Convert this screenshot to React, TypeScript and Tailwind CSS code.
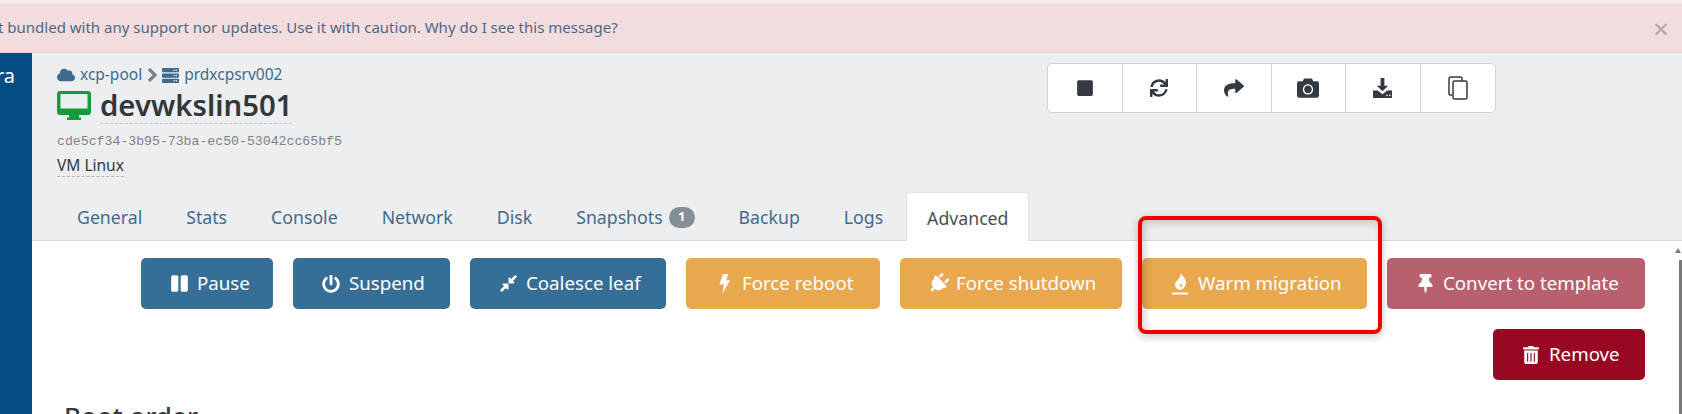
import { FaCamera, FaCloud, FaCompressAlt, FaPause, FaPlug, FaPowerOff, FaServer, FaShare, FaStop, FaSync, FaThumbtack, FaTrashAlt } from 'react-icons/fa'
import type { ReactNode } from 'react'

const tabs = ['General', 'Stats', 'Console', 'Network', 'Disk']

function BoltIcon() {
  return (
    <svg viewBox="0 0 10 18" className="w-[11px] h-[20px]" fill="currentColor">
      <path d="M3.500 0h5L6.500 5.500H10L3 18l1.500-8.500H.5z" />
    </svg>
  )
}

function FireIcon() {
  return (
    <svg viewBox="0 0 16 22" className="w-[16px] h-[22px]" fill="currentColor">
      <path fillRule="evenodd" d="M9 0c1 3 5 5 5 9.500 0 4-3 7-6.500 7.500C4.500 16.500 3 14 3 11.500 3 8 9 5 9 0zM9.500 10c-1 1.500-1.500 2-1.500 3 0 1 .5 1.500 1 1.200 1-1 1.200-2.500.5-4.200z" />
      <rect x="0" y="19.500" width="16" height="2" />
    </svg>
  )
}

function VmIcon() {
  return (
    <svg viewBox="0 0 34 29" className="w-[34px] h-[29px]" fill="#179a3a">
      <path fillRule="evenodd" d="M3 0h28a3 3 0 0 1 3 3v18a3 3 0 0 1-3 3H3a3 3 0 0 1-3-3V3a3 3 0 0 1 3-3zM3.500 3v14.500h27V3z" />
      <rect x="12" y="23" width="10" height="4" />
      <rect x="10" y="26.500" width="14" height="2.500" />
    </svg>
  )
}

function PathChevron() {
  return (
    <svg viewBox="0 0 10 14" className="w-[10px] h-[14px]" fill="none" stroke="#7a8288" strokeWidth="3.200">
      <path d="M2 1l6 6-6 6" />
    </svg>
  )
}

function DownloadDrive() {
  return (
    <svg viewBox="0 0 20 22" className="w-[19px] h-[21px]" fill="currentColor">
      <path d="M8 0h4v8h4l-6 6-6-6h4z" />
      <path d="M0 13h5l5 4 5-4h5v8H0z" />
      <rect x="14" y="17.500" width="1.500" height="1.500" fill="#fff" />
      <rect x="17" y="17.500" width="1.500" height="1.500" fill="#fff" />
    </svg>
  )
}

function CopyIcon() {
  return (
    <svg viewBox="0 0 20 24" className="w-[20px] h-[24px]" fill="none" stroke="currentColor" strokeWidth="1.500">
      <path d="M4 19H2.500A1.500 1.500 0 0 1 1 17.500V2.500A1.500 1.500 0 0 1 2.500 1h10A1.500 1.500 0 0 1 14 2.500V5" />
      <rect x="5" y="5" width="14" height="18" rx="1.500" />
    </svg>
  )
}

function ActionButton({ icon, label, className }: { icon: ReactNode; label: string; className: string }) {
  return (
    <button className={`h-[51px] rounded-[5px] pl-[27px] flex items-center gap-[7px] text-white text-[18.700px] ${className}`}>
      <span className="w-[22px] flex items-center justify-center">{icon}</span>
      <span>{label}</span>
    </button>
  )
}

export default function App() {
  const toolbar = [
    <FaStop key="stop" size={18} />,
    <FaSync key="sync" size={18} />,
    <FaShare key="share" size={20} />,
    <FaCamera key="camera" size={22} />,
    <DownloadDrive key="download" />,
    <CopyIcon key="copy" />,
  ]

  return (
    <div className="w-[1682px] h-[414px] overflow-hidden bg-white relative font-['Noto_Sans','Open_Sans',sans-serif] text-[#343a40]">
      <div className="h-[3px] bg-[#f6efe9]" />
      <div className="h-[50px] bg-[#f3dcdd] border-b border-[#ecd0d2] flex items-center justify-between pr-[13px] text-[#4d6a85] text-[15px] overflow-hidden">
        <span className="-ml-[2px]">t bundled with any support nor updates. Use it with caution. Why do I see this message?</span>
        <span className="text-[#b3a6a9] text-[28px] leading-none">×</span>
      </div>
      <div className="flex h-[361px]">
        <aside className="w-[32px] shrink-0 bg-[#034c81] text-white text-[20px] pt-[8px] overflow-hidden">
          <span className="block -ml-[4px]">ra</span>
        </aside>
        <main className="flex-1 min-w-0">
          <header className="h-[188px] bg-[#eceef0] border-b border-[#d9dcdf] flex flex-col relative">
            <div className="flex justify-between pl-[25px]">
              <div className="pt-[12px]">
                <div className="flex items-center gap-[5px] text-[15.500px] text-[#3f6b8f] h-[20px]">
                  <FaCloud size={18} />
                  <span>xcp-pool</span>
                  <PathChevron />
                  <FaServer size={17} />
                  <span>prdxcpsrv002</span>
                </div>
                <div className="flex items-center gap-[9px] h-[40px]">
                  <VmIcon />
                  <h1 className="text-[29.300px] font-semibold leading-[36px] border-b border-dashed border-[#c4c7ca] text-[#32373b]">devwkslin501</h1>
                </div>
                <div className="font-['Liberation_Mono',monospace] text-[13.200px] text-[#7d8388] mt-[7px]">cde5cf34-3b95-73ba-ec50-53042cc65bf5</div>
                <div className="text-[15.500px] mt-[3px] w-fit border-b border-dashed border-[#b5b8bb] leading-[21px]">VM Linux</div>
              </div>
              <div className="mr-[186px] mt-[10px] h-[50px] flex bg-white border border-[#cfd2d4] rounded-[5px]">
                {toolbar.map((icon, i) => (
                  <div key={i} className="w-[74.500px] flex items-center justify-center text-[#343a40] border-r border-[#cfd2d4] last:border-r-0">
                    {icon}
                  </div>
                ))}
              </div>
            </div>
            <nav className="mt-auto flex items-end h-[48px] pl-[23px] text-[17.700px] text-[#3f6b8f]">
              {tabs.map((t) => (
                <div key={t} className="px-[22px] h-full pt-[2px] flex items-center">{t}</div>
              ))}
              <div className="px-[22px] h-full pt-[2px] flex items-center gap-[6px]">
                <span>Snapshots</span>
                <span className="w-[26px] h-[21px] rounded-full bg-[#868e96] text-white text-[13px] font-bold flex items-center justify-center">1</span>
              </div>
              <div className="px-[22px] h-full pt-[2px] flex items-center">Backup</div>
              <div className="px-[22px] h-full pt-[2px] flex items-center">Logs</div>
              <div className="ml-[1px] px-[20px] h-[49px] -mb-px bg-white border border-b-0 border-[#dee2e6] rounded-t-[4px] pt-[2px] flex items-center text-[#495057]">Advanced</div>
            </nav>
          </header>
          <section className="pr-[37px]">
            <div className="flex flex-wrap justify-end gap-x-[20px] gap-y-[20px] pt-[17px]">
              <ActionButton icon={<FaPause size={19} />} label="Pause" className="w-[132px] bg-[#366e98]" />
              <ActionButton icon={<FaPowerOff size={18} />} label="Suspend" className="w-[157px] bg-[#366e98]" />
              <ActionButton icon={<FaCompressAlt size={19} />} label="Coalesce leaf" className="w-[196px] bg-[#366e98]" />
              <ActionButton icon={<BoltIcon />} label="Force reboot" className="w-[194px] bg-[#e9a84e]" />
              <ActionButton icon={<FaPlug size={21} className="rotate-45" />} label="Force shutdown" className="w-[222px] bg-[#e9a84e]" />
              <ActionButton icon={<FireIcon />} label="Warm migration" className="w-[225px] bg-[#e9a84e]" />
              <ActionButton icon={<FaThumbtack size={19} />} label="Convert to template" className="w-[258px] bg-[#b9606f]" />
              <ActionButton icon={<FaTrashAlt size={18} />} label="Remove" className="w-[152px] bg-[#990823]" />
            </div>
            <h2 className="pl-[32px] mt-[17px] text-[26px] font-medium text-[#343a40]">Boot order</h2>
          </section>
        </main>
      </div>
      <div className="absolute left-[1138px] top-[216px] w-[244px] h-[118px] border-[4px] border-[#f00000] rounded-[8px] shadow-[0_2px_8px_rgba(0,0,0,0.25),inset_3px_3px_8px_rgba(0,0,0,0.18)]" />
      <div className="absolute right-0 top-[260px] w-[3px] h-[154px] bg-[#77797b]" />
      <div className="absolute right-[1px] top-[248px] w-0 h-0 border-x-[3px] border-x-transparent border-b-[5px] border-b-[#77797b]" />
    </div>
  )
}
